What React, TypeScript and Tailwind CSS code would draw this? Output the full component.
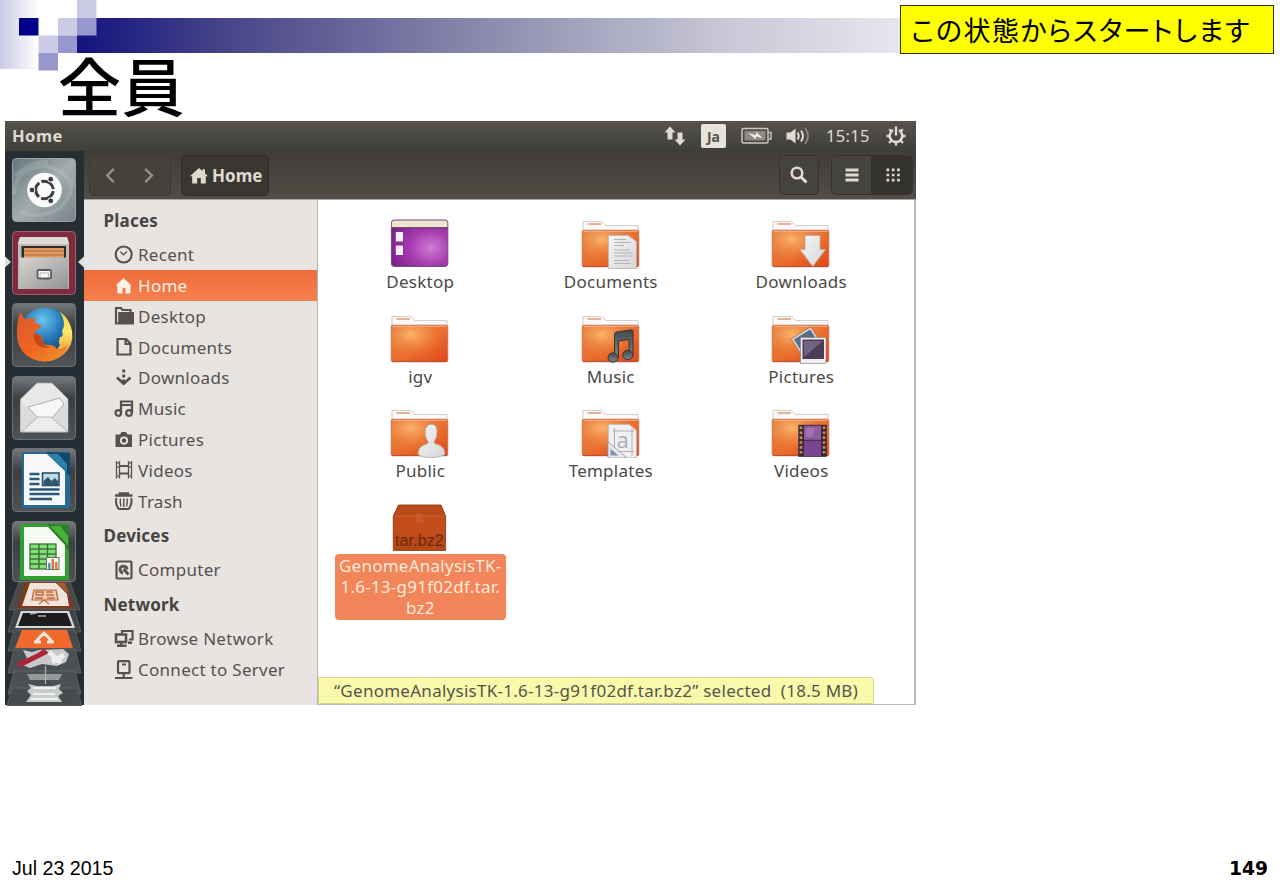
import type { ReactNode } from 'react';

function SharedGradients() {
  return (
    <svg className="absolute h-0 w-0" aria-hidden="true">
      <defs>
        <linearGradient id="folder" x1="0" y1="0" x2="1" y2="1">
          <stop offset="0" stopColor="#dd7a43" />
          <stop offset="0.5" stopColor="#e96f30" />
          <stop offset="1" stopColor="#e2481b" />
        </linearGradient>
        <radialGradient id="folderGlow" cx="0.35" cy="0.25" r="0.65">
          <stop offset="0" stopColor="#ffc078" stopOpacity="0.85" />
          <stop offset="1" stopColor="#f07a2c" stopOpacity="0" />
        </radialGradient>
        <radialGradient id="purple" cx="0.7" cy="0.6" r="0.75">
          <stop offset="0" stopColor="#cf7cd2" />
          <stop offset="0.5" stopColor="#a63bb0" />
          <stop offset="1" stopColor="#7b2289" />
        </radialGradient>
        <linearGradient id="paper" x1="0" y1="0" x2="1" y2="1">
          <stop offset="0" stopColor="#f6f6f6" />
          <stop offset="1" stopColor="#d5d6d8" />
        </linearGradient>
        <linearGradient id="note" x1="0" y1="0" x2="0" y2="1">
          <stop offset="0" stopColor="#444a4c" />
          <stop offset="1" stopColor="#7b8587" />
        </linearGradient>
        <linearGradient id="tile" x1="0" y1="0" x2="0" y2="1">
          <stop offset="0" stopColor="#75797b" />
          <stop offset="0.35" stopColor="#3b3f42" />
          <stop offset="1" stopColor="#505456" />
        </linearGradient>
        <linearGradient id="dash" x1="0" y1="0" x2="1" y2="1">
          <stop offset="0" stopColor="#64747a" />
          <stop offset="0.5" stopColor="#a2adaf" />
          <stop offset="1" stopColor="#778488" />
        </linearGradient>
        <linearGradient id="cabinet" x1="0" y1="0" x2="1" y2="1">
          <stop offset="0" stopColor="#d6d5d3" />
          <stop offset="1" stopColor="#949391" />
        </linearGradient>
        <radialGradient id="globe" cx="0.45" cy="0.25" r="0.75">
          <stop offset="0" stopColor="#6cc5ee" />
          <stop offset="0.5" stopColor="#2478b9" />
          <stop offset="1" stopColor="#123a6e" />
        </radialGradient>
        <linearGradient id="fox" x1="0" y1="0" x2="1" y2="1">
          <stop offset="0" stopColor="#d95a2b" />
          <stop offset="0.5" stopColor="#ee6422" />
          <stop offset="1" stopColor="#f0952c" />
        </linearGradient>
        <linearGradient id="tail" x1="0" y1="0" x2="0" y2="1">
          <stop offset="0" stopColor="#f7d34c" />
          <stop offset="0.4" stopColor="#fbe86c" />
          <stop offset="1" stopColor="#ee7a22" />
        </linearGradient>
      </defs>
    </svg>
  );
}

/* ---------- folder view icons ---------- */

function Folder({ children }: { children?: ReactNode }) {
  return (
    <svg viewBox="0 0 60 50" className="block h-[50px] w-[60px] shrink-0">
      <path d="M2 13V2.4H20.5L25 6.6H57V13Z" fill="#fbfaf8" stroke="#c3c0bd" strokeWidth="0.8" />
      <path d="M6.5 5H20" stroke="#e3a587" strokeWidth="1.7" />
      <rect x="1.2" y="11.2" width="56.6" height="36.6" rx="1.6" fill="url(#folder)" />
      <rect x="1.2" y="11.2" width="56.6" height="36.6" rx="1.6" fill="url(#folderGlow)" stroke="#c96b4b" strokeWidth="0.8" />
      <path d="M2.5 12.4H56.5" stroke="#f6b893" strokeWidth="0.8" />
      <path d="M2 47.4H57" stroke="#b04a28" strokeWidth="0.9" />
      {children}
    </svg>
  );
}

function DesktopIcon() {
  return (
    <svg viewBox="0 0 60 50" className="block h-[50px] w-[60px] shrink-0">
      <rect x="1.4" y="1" width="56.4" height="46.5" rx="3" fill="url(#purple)" stroke="#6d4b78" strokeWidth="1" />
      <path d="M1.8 8.4V4a2.6 2.6 0 0 1 2.6-2.6H54.8A2.6 2.6 0 0 1 57.4 4V8.4Z" fill="#eee5cf" />
      <path d="M1.5 8.8H57.6" stroke="#6b3a66" strokeWidth="1.2" />
      <rect x="5" y="12" width="9" height="11.5" fill="#803093" />
      <rect x="5" y="25.500" width="9" height="11.500" fill="#803093" />
      <rect x="5.800" y="13" width="7.200" height="9.500" fill="#f7ecf8" />
      <rect x="5.800" y="26.500" width="7.200" height="9.500" fill="#f7ecf8" />
    </svg>
  );
}

function DocumentsIcon() {
  return (
    <Folder>
      <path d="M27.3 16.3H47L55.5 22.5V49.7H27.3Z" fill="url(#paper)" stroke="#b0aca8" strokeWidth="0.8" />
      <path d="M33 20.5h12M33 23.5h17M33 26.5h10M33 31h16M33 34h19M33 37h19M33 41.5h15M33 44.5h17" stroke="#b4b4b4" strokeWidth="1" />
    </Folder>
  );
}

function DownloadsIcon() {
  return (
    <Folder>
      <path d="M34 16.5H49V30.5H54.5L41.7 47.5L29 30.5H34Z" fill="url(#paper)" stroke="#c3a99c" strokeWidth="0.8" />
    </Folder>
  );
}

function MusicIcon() {
  return (
    <Folder>
      <g fill="url(#note)" stroke="#3c3230" strokeWidth="1">
        <path d="M33.5 43V20Q33.8 18.4 35.5 18L50.5 15.8Q52 15.8 52 17.4V41.5H48V25.5L37.5 27V43.5Z" />
        <ellipse cx="32" cy="43.5" rx="5" ry="4.7" />
        <ellipse cx="46.8" cy="41" rx="5" ry="4.7" />
      </g>
    </Folder>
  );
}

function PicturesIcon() {
  return (
    <Folder>
      <g transform="rotate(-32 34 27)">
        <rect x="23.5" y="18" width="23" height="22" fill="#ded8d6" stroke="#8d6a5e" strokeWidth="0.7" />
        <rect x="25.5" y="20" width="19" height="16" fill="#5a6c86" />
      </g>
      <rect x="29.5" y="23.5" width="25.5" height="25.8" fill="#f1eff0" stroke="#8f807e" strokeWidth="0.7" />
      <rect x="31.5" y="25.5" width="21.5" height="19.5" fill="#4c3c58" />
      <path d="M33 27H51.5L33 43Z" fill="#706580" />
    </Folder>
  );
}

function PublicIcon() {
  return (
    <Folder>
      <path d="M28 46.5Q28 38 37 35.8L38.5 34Q34.800 30 35.300 23Q36 16.300 41.300 16.300Q46.800 16.300 47 23Q47.300 30 43.800 34L45.500 35.800Q55 38 55 46.500Q50 49.600 41.500 49.600Q32 49.600 28 46.500Z" fill="url(#paper)" stroke="#b5a49d" strokeWidth="0.8" />
    </Folder>
  );
}

function TemplatesIcon() {
  return (
    <Folder>
      <path d="M27.3 16.3H48L55.5 22.5V49.7H27.3Z" fill="#f0f0f3" stroke="#b5b1b0" strokeWidth="0.8" />
      <path d="M31.5 23H53M31.5 43.5H53M33.5 20V47M51 20V48" stroke="#a9a8b3" strokeWidth="0.9" fill="none" />
      <text x="35.5" y="39.5" fontSize="22" fontFamily="Noto Sans, sans-serif" fill="#adacbb">a</text>
      <path d="M27 34L46 50H27Z" fill="#e9e9ef" stroke="#8c8fa0" strokeWidth="0.8" />
      <path d="M29.5 40.5L37.5 47.5H29.5Z" fill="#8193ab" />
    </Folder>
  );
}

function VideosIcon() {
  return (
    <Folder>
      <rect x="27.3" y="16.8" width="28.4" height="32" fill="#362a35" />
      <rect x="33" y="17.8" width="17" height="14" fill="#8d5a9e" />
      <rect x="33" y="32.7" width="17" height="15.5" fill="#7b4490" />
      <path d="M35 20h9l-3 9h-6z" fill="#b282bd" opacity="0.6" />
      <path d="M30 18.5V48M53 18.5V48" stroke="#c7885c" strokeWidth="2.6" strokeDasharray="2.6 2.3" />
    </Folder>
  );
}

function ArchiveIcon() {
  return (
    <svg viewBox="0 0 60 50" className="block h-[50px] w-[60px] shrink-0">
      <path d="M8.5 2H51L55.6 13V47.5H3.3V13Z" fill="#b64718" />
      <path d="M8.5 2H51L55.6 13H3.3Z" fill="#b94b1b" />
      <path d="M3.3 13H55.6V34H3.3Z" fill="#c24d1b" />
      <path d="M3.3 13H55.6" stroke="#ce6334" strokeWidth="1" />
      <path d="M26 11h7v9h-7z" fill="#cb602f" opacity="0.7" />
      <path d="M3.3 13L8.5 2H51L55.6 13V47.5H3.3Z" fill="none" stroke="#93401d" strokeWidth="0.9" />
      <text x="5" y="43" fontSize="16" textLength="49" fontFamily="Liberation Sans, sans-serif" fill="#6d2a0e">tar.bz2</text>
    </svg>
  );
}

/* ---------- sidebar icons ---------- */

function Glyph({ children }: { children: ReactNode }) {
  return (
    <svg viewBox="0 0 20 20" className="block h-5 w-5 shrink-0" fill="none" stroke="currentColor" strokeWidth="2.2">
      {children}
    </svg>
  );
}

function House({ className }: { className: string }) {
  return (
    <svg viewBox="0 0 18 16" className={className} fill="currentColor">
      <path d="M9 0L12.5 3V1.2H15V5.3L18 8.2H15.8V15.5H10.8V10H7.2V15.5H2.2V8.2H0Z" />
    </svg>
  );
}

const clock = (
  <Glyph>
    <circle cx="9.7" cy="9.5" r="8" />
    <path d="M6.3 6.8L9.5 9.8L13 6.5" strokeWidth="1.3" />
  </Glyph>
);
const home = (
  <Glyph>
    <path fill="currentColor" stroke="none" d="M9.5 2L17.5 9.5H16.5V17.5H11.5V12H8.500V17.500H3.300V9.500H1.700Z" />
  </Glyph>
);
const desktop = (
  <Glyph>
    <path d="M2 18V2H7L8.5 4H16.5V6" />
    <path fill="currentColor" stroke="none" d="M4.200 6H20V18.500H4.200ZM1 16.500H5V18.500H1Z" />
  </Glyph>
);
const documents = (
  <Glyph>
    <path d="M3.5 2H12L16.5 6.5V17.5H3.5Z M11.5 2V7H16.5" />
  </Glyph>
);
const downloads = (
  <Glyph>
    <path d="M3 9.5L9.7 15.8L16.500 9.500" strokeWidth="2.6" />
    <path d="M9.7 1.500V15.500" strokeDasharray="3 2" strokeWidth="3" />
  </Glyph>
);
const music = (
  <Glyph>
    <path d="M7 14.5V2.500H18V14M7 6H18" />
    <circle cx="4.300" cy="14" r="2.800" />
    <circle cx="15" cy="14" r="2.800" />
  </Glyph>
);
const pictures = (
  <Glyph>
    <path fill="currentColor" fillRule="evenodd" stroke="none" d="M1.500 4.500H6L7.500 2H12L13.500 4.500H18V17H1.500Z M10 6.500A4 4 0 1 0 10 14.700A4 4 0 1 0 10 6.500Z" />
    <circle cx="10" cy="10.500" r="2.200" fill="currentColor" stroke="none" />
  </Glyph>
);
const videos = (
  <Glyph>
    <path d="M2.5 1V18.500M5.500 1V18.500M14.500 1V18.500M17.500 1V18.500" strokeWidth="1.3" />
    <path d="M2 3H6M2 7H6M2 16H6M14 3H18M14 7H18M14 16H18" strokeWidth="1.200" />
    <path d="M5 6H15M5 13.500H15" />
  </Glyph>
);
const trash = (
  <Glyph>
    <path d="M1 4.500H18.500M4.500 2.500H15" strokeWidth="2.400" />
    <path d="M2.500 7C1.500 9.500 1.500 12.500 4 17Q4.500 18 6 18H13.500Q15 18 15.500 17C18 12.500 18 9.500 17 7" strokeWidth="2" />
    <path d="M6.500 7.500C5.800 10.500 6 12.500 7 15.500M9.800 7.500V16M13 7.500C13.700 10.500 13.500 12.500 12.500 15.500" strokeWidth="1.400" />
  </Glyph>
);
const computer = (
  <Glyph>
    <rect x="2.500" y="1.500" width="15" height="17" rx="1.300" />
    <path d="M9 13A3.500 3.500 0 1 1 13 9.500" strokeWidth="2.800" />
    <path d="M9.500 9L14.500 14.500" strokeWidth="2.800" />
  </Glyph>
);
const browse = (
  <Glyph>
    <path d="M8 4V2H18.500V10.500H15" />
    <rect x="2" y="5.500" width="10" height="7.500" strokeWidth="2.600" />
    <path d="M3 16.700H12.500M7.200 13V17M14 13.700H18" strokeWidth="2.600" />
  </Glyph>
);
const server = (
  <Glyph>
    <rect x="4" y="1.200" width="11.500" height="12" rx="1" />
    <path d="M8 4.500H12M9.700 13.500V18M1 18H18.500" strokeWidth="2.200" />
  </Glyph>
);

/* ---------- launcher tiles ---------- */

function Tile({ children, fill = 'url(#tile)', stroke = '#6d7274' }: { children: ReactNode; fill?: string; stroke?: string }) {
  return (
    <svg viewBox="0 0 64 64" className="block h-16 w-16 shrink-0">
      <rect x="0.500" y="0.500" width="63" height="63" rx="4" fill={fill} stroke={stroke} />
      {children}
    </svg>
  );
}

function DashTile() {
  return (
    <Tile fill="url(#dash)" stroke="#9aa5a8">
      <path d="M2 36Q4 8 34 8Q54 12 60 30M8 54Q26 62 48 50Q60 40 60 20M4 18Q16 4 36 4" fill="none" stroke="#c3cccd" strokeWidth="4" opacity="0.250" />
      <circle cx="32.500" cy="32" r="17.300" fill="#fbfbfb" />
      <circle cx="32.500" cy="32" r="8.800" fill="none" stroke="#3a3f42" strokeWidth="3" strokeDasharray="16 2.430" strokeDashoffset="-1.200" />
      <g fill="#3a3f42" stroke="#fbfbfb" strokeWidth="1">
        <circle cx="20" cy="32" r="2.900" />
        <circle cx="38.700" cy="21.200" r="2.900" />
        <circle cx="38.700" cy="42.800" r="2.900" />
      </g>
    </Tile>
  );
}

function FilesTile() {
  return (
    <Tile fill="#7e2b40" stroke="#a45b6c">
      <path d="M8 6H55L57 12V58H6V12Z" fill="#bcbab7" />
      <path d="M8 6H55L57 13H6Z" fill="#dddbd8" />
      <rect x="9.500" y="15" width="44.500" height="14" fill="#322c29" />
      <path d="M12 17H52V29H12Z" fill="#dc9a5e" />
      <path d="M12 20H52M12 24H52" stroke="#c07a48" strokeWidth="1.300" />
      <rect x="7.500" y="26.500" width="48.500" height="31.500" fill="url(#cabinet)" />
      <rect x="25.500" y="39" width="13.500" height="8.500" rx="1.500" fill="#f6f6f6" stroke="#5c5a58" strokeWidth="1.800" />
      <path d="M28 46V42H36.500V46" fill="none" stroke="#a5a29e" strokeWidth="0.800" />
    </Tile>
  );
}

function FirefoxTile() {
  return (
    <Tile>
      <circle cx="33" cy="30" r="25.500" fill="url(#globe)" />
      <path d="M48 9Q58 16 60 28Q62 42 52 51Q42 60 28 58Q42 53 48 42Q46 40 48 34Q52 34 50 28Q55 20 48 9Z" fill="url(#tail)" />
      <path d="M9 8Q10 14 13 16Q18 14 23 16Q22 19 25 21Q27 22 30 22Q28 26 24 27Q21 30 23 32Q29 31 31 36Q29 42 38 42Q42 42 45 46Q52 47 56 41Q52 54 40 57.500Q26 61 14 52Q5 44 5 32Q4 18 9 8Z" fill="url(#fox)" />
      <path d="M22 30Q20 38 27 43Q32 46 38 44Q32 43 31 38Q31 32 22 30Z" fill="#c3491c" />
    </Tile>
  );
}

function MailTile() {
  return (
    <Tile>
      <path d="M8.500 23L25 7H40L56 23V56H8.500Z" fill="#e8e8e8" stroke="#a8a8a8" strokeWidth="0.700" />
      <path d="M8.500 25L27 42H37L56 25V56H8.500Z" fill="#dcdcdd" />
      <path d="M16 31L48 22L52 28L40 42H26Z" fill="#f7f7f7" stroke="#9c9c9c" strokeWidth="0.800" />
      <path d="M9 56L26 41H39L56 56Z" fill="#ececec" stroke="#aaaaaa" strokeWidth="0.800" />
    </Tile>
  );
}

function WriterTile() {
  return (
    <Tile>
      <path d="M10 4H58V60H10Z" fill="#236c96" />
      <path d="M34 4L58 5V28Z" fill="#16476b" />
      <path d="M12 6H35L53 23V57H12Z" fill="#f5f7f9" />
      <path d="M36 6H46L55 16V24Z" fill="#2d80a9" />
      <path d="M17.500 26H27.500M17.500 31H27.500M17.500 36H27.500M17.500 41.500H47.500M17.500 46H47.500M17.500 51H40" stroke="#29587a" strokeWidth="2.600" />
      <rect x="30.500" y="25" width="16.500" height="12.500" fill="#bddde9" stroke="#29506b" strokeWidth="1.600" />
      <path d="M31.500 36V33L36 29L39.500 33L43 30L46 33V37H31.500Z" fill="#31566c" />
    </Tile>
  );
}

function CalcTile() {
  return (
    <svg viewBox="0 0 64 61" className="block h-[61px] w-16 shrink-0">
      <rect x="0.500" y="0.500" width="63" height="60" rx="4" fill="url(#tile)" stroke="#717b76" />
      <path d="M8 3H57V59H8Z" fill="#2f9f2d" />
      <path d="M35 3L57 4V30Z" fill="#2f7b2d" />
      <path d="M12 6H36L53 24V55H12Z" fill="#f5faf2" />
      <path d="M38 5H48L56 15V24Z" fill="#46b338" />
      <rect x="18" y="23" width="26" height="25" fill="#84e077" stroke="#3d713b" strokeWidth="1.300" />
      <path d="M27 23V48M35.500 23V48M18 28H44M18 33H44M18 38H44M18 43H44" stroke="#3d713b" strokeWidth="1.400" />
      <rect x="34.500" y="36.500" width="12.500" height="12" fill="#f4f4f4" stroke="#627662" strokeWidth="1" />
      <path d="M40.800 48V38M44.300 48V41" stroke="#dc7838" strokeWidth="2.400" />
      <path d="M37.300 48V42" stroke="#4b91c4" strokeWidth="2.400" />
    </svg>
  );
}

function FoldedTiles() {
  return (
    <svg viewBox="0 0 79 124" className="block h-[124px] w-[79px] shrink-0">
      <path d="M14 0H65L75 28H4Z" fill="#4c4948" stroke="#5f6364" strokeWidth="0.800" />
      <path d="M20 0H60L69 27H12Z" fill="#7b3b1d" />
      <path d="M25 1H51L62 12L64 24H17Z" fill="#f1e4dc" />
      <path d="M51 1H60L64 12Z" fill="#a85b32" />
      <path d="M29 8H51L53 18H27Z" fill="#f3cdb5" stroke="#ae6238" strokeWidth="1.200" />
      <path d="M31 10H38V13H31ZM41 10H48M41 13H49M30 16H38M42 16H50M34 22L39 18L44 22" fill="none" stroke="#ba6b3c" strokeWidth="1.300" />
      <path d="M10 27H69L76 50H3Z" fill="#404648" stroke="#5f6466" strokeWidth="0.800" />
      <path d="M16 29H64L70 46H10Z" fill="#d8d8d8" />
      <path d="M18 31H62L67 44H13Z" fill="#1d1d20" />
      <path d="M25 32L32 31M33 34H41" stroke="#a9a9a9" strokeWidth="1.500" />
      <path d="M9 48H70L76 69H3Z" fill="#454a4c" stroke="#5f6466" strokeWidth="0.800" />
      <path d="M17 48H62L68 66H10Z" fill="#f06a2e" />
      <path d="M34 56L39 51L44 56M29 60H36M42 60H49M34 56L31 60M44 56L47 60" fill="none" stroke="#fbe4d8" strokeWidth="3" />
      <path d="M9 67H70L76 91H3Z" fill="#4b5052" stroke="#626769" strokeWidth="0.800" />
      <path d="M18 68L27 70L34 68L58 67L64 72L61 80L52 84L37 82L25 86L15 82L22 76Z" fill="#c7c9c9" />
      <path d="M12 81Q11 86 18 84L44 71L39 67L31 72Z" fill="#ad2437" />
      <path d="M44 70L56 81M47 80L59 73" stroke="#eeeeee" strokeWidth="5" />
      <path d="M9 89H70L76 112H3Z" fill="#4b5052" stroke="#626769" strokeWidth="0.800" />
      <path d="M22 92H57L54 98H25Z" fill="#94999a" />
      <path d="M7 106H72L77 124H2Z" fill="#464c4e" stroke="#5f6466" strokeWidth="0.800" />
      <path d="M23 102L32 104H48L56 102L54 107L58 111L53 114L57 120H21L26 113L22 109L26 106Z" fill="#c8cbcb" />
      <path d="M28 106H51M28 112H50M26 117H53" stroke="#f0f0f0" strokeWidth="1.800" />
      <path d="M40.500 84V102" stroke="#aeb2b3" strokeWidth="1.200" />
    </svg>
  );
}

/* ---------- data ---------- */

type Place = { label: string; icon: ReactNode; active?: boolean };
type Section = { title: string; items: Place[] };

const sections: Section[] = [
  {
    title: 'Places',
    items: [
      { label: 'Recent', icon: clock },
      { label: 'Home', icon: home, active: true },
      { label: 'Desktop', icon: desktop },
      { label: 'Documents', icon: documents },
      { label: 'Downloads', icon: downloads },
      { label: 'Music', icon: music },
      { label: 'Pictures', icon: pictures },
      { label: 'Videos', icon: videos },
      { label: 'Trash', icon: trash },
    ],
  },
  { title: 'Devices', items: [{ label: 'Computer', icon: computer }] },
  {
    title: 'Network',
    items: [
      { label: 'Browse Network', icon: browse },
      { label: 'Connect to Server', icon: server },
    ],
  },
];

const files: { label: string; icon: ReactNode }[] = [
  { label: 'Desktop', icon: <DesktopIcon /> },
  { label: 'Documents', icon: <DocumentsIcon /> },
  { label: 'Downloads', icon: <DownloadsIcon /> },
  { label: 'igv', icon: <Folder /> },
  { label: 'Music', icon: <MusicIcon /> },
  { label: 'Pictures', icon: <PicturesIcon /> },
  { label: 'Public', icon: <PublicIcon /> },
  { label: 'Templates', icon: <TemplatesIcon /> },
  { label: 'Videos', icon: <VideosIcon /> },
];

/* ---------- regions ---------- */

function SlideHeader() {
  return (
    <header className="relative h-[121px]">
      <div className="absolute left-0 top-0 h-[69px] w-[39px] bg-linear-to-r from-[#cbcbe8] to-white" />
      <div className="absolute left-[77px] top-[18px] h-[35px] w-[1190px] bg-[linear-gradient(to_right,#131380_0%,#494789_13%,#625f97_21%,#8080a8_31%,#acacc3_45%,#c9c9d7_55%,#e6e6ee_69%,#ffffff_100%)]" />
      <svg viewBox="0 0 100 72" className="absolute left-0 top-0 h-[72px] w-[100px]">
        <rect x="19" y="18" width="19.500" height="17.500" fill="#00008b" />
        <rect x="38.500" y="35.500" width="19.500" height="17.500" fill="#cbcbe6" />
        <rect x="58" y="18" width="19" height="17.500" fill="#cbcbe6" />
        <rect x="77" y="0" width="19.500" height="18" fill="#cbcbe6" />
        <rect x="77" y="18" width="19.500" height="17.500" fill="#9797cd" />
        <rect x="58" y="35.500" width="19" height="17.500" fill="#9797cd" />
        <rect x="38.500" y="53" width="19.500" height="17.500" fill="#9797cd" />
      </svg>
      <h1 className="absolute left-[58px] top-[48px] text-[63px] font-medium leading-[72px] tracking-[0.5px] font-['Noto_Sans_CJK_JP',sans-serif]">全員</h1>
      <div className="absolute left-[900px] top-[5px] flex h-[49px] w-[374px] items-center border-[1.5px] border-[#303000] bg-[#ffff00] pl-[10px]">
        <span className="whitespace-nowrap text-[27px] leading-none tracking-[1.5px] [font-feature-settings:'palt'] font-['Noto_Sans_CJK_JP',sans-serif]">この状態からスタートします</span>
      </div>
    </header>
  );
}

function TopPanel() {
  return (
    <div className="flex h-[30px] items-center bg-linear-to-b from-[#55534c] to-[#403e39] pl-[7px] pr-[10px] text-[#dfdbd2]">
      <span className="text-[16.5px] font-bold tracking-[0.5px]">Home</span>
      <svg viewBox="0 0 22 20" className="ml-auto h-5 w-[22px]" fill="currentColor">
        <path d="M6 0.500L11.500 6.500H8.500V13.500H3.500V6.500H0.500Z" />
        <path d="M16 19.500L10.500 13.500H13.500V6.500H18.500V13.500H21.500Z" />
      </svg>
      <div className="ml-[15px] flex h-6 w-[25px] items-center justify-center rounded-[2px] bg-[#e6e3dc] text-[14px] font-bold text-[#56524c]">Ja</div>
      <svg viewBox="0 0 31 18" className="ml-[15px] h-[18px] w-[31px]">
        <rect x="1" y="1.500" width="26" height="14.500" rx="1.500" fill="none" stroke="#cbc7bf" strokeWidth="1.500" />
        <rect x="3.500" y="4" width="21" height="9.500" fill="#8d8983" />
        <path d="M28 5.500H30V12H28" fill="none" stroke="#cbc7bf" strokeWidth="1.400" />
        <path d="M7 6L15 8V4.500L22 11.500L15 9.500V12.500Z" fill="#eeeae2" />
      </svg>
      <svg viewBox="0 0 25 20" className="ml-[14px] h-5 w-[25px]" fill="none" stroke="currentColor">
        <path d="M0.500 6.500H4.500L9.500 2.500V17.500L4.500 13.500H0.500Z" fill="currentColor" stroke="none" />
        <path d="M11.500 6.500Q14 10 11.500 13.500M15 4.500Q19 10 15 15.500" strokeWidth="2" />
        <path d="M19 2Q25 10 19 18" stroke="#8b8881" strokeWidth="1.800" />
      </svg>
      <span className="ml-[15px] w-[45px] whitespace-nowrap text-[16.5px] tracking-[0.3px]">15:15</span>
      <svg viewBox="0 0 20 20" className="ml-[15px] h-5 w-5" fill="none" stroke="currentColor">
        <path d="M7 4.200A6.300 6.300 0 1 0 13 4.200" strokeWidth="2.500" />
        <path d="M10 0.500V9.500" strokeWidth="2.300" />
        <path d="M10 16V19.500M4 10H0.500M16 10H19.500M5.500 14.500L3 17M14.500 14.500L17 17M5.500 5.500L3.200 3.200M14.500 5.500L16.800 3.200" strokeWidth="2.300" />
      </svg>
    </div>
  );
}

function Launcher() {
  return (
    <aside className="relative flex w-[79px] shrink-0 flex-col bg-[#262e33]">
      <div className="flex flex-col gap-[8.5px] pl-[7px] pt-[7px]">
        <DashTile />
        <FilesTile />
        <FirefoxTile />
        <MailTile />
        <WriterTile />
        <CalcTile />
      </div>
      <FoldedTiles />
      <svg viewBox="0 0 79 12" className="absolute left-0 top-[105px] h-3 w-[79px]" fill="#dfdfdf">
        <path d="M0 0.500L6 6L0 11.500ZM79 0.500L73 6L79 11.500Z" />
      </svg>
    </aside>
  );
}

function Toolbar() {
  return (
    <div className="flex h-[49px] items-center border-b border-[#aaa7a2] bg-linear-to-b from-[#403d39] to-[#514e47] pl-[5px] pr-[3px] text-[#dfdbd2]">
      <div className="flex h-[41px] w-[82px] items-center justify-around rounded-[5px] border border-[#3d3a35] bg-[#45423c] pr-[2px]">
        <svg viewBox="0 0 12 18" className="h-[17px] w-3" fill="none" stroke="#969289" strokeWidth="2.5">
          <path d="M10 2L3 9L10 16" />
        </svg>
        <svg viewBox="0 0 12 18" className="h-[17px] w-3" fill="none" stroke="#969289" strokeWidth="2.5">
          <path d="M2 2L9 9L2 16" />
        </svg>
      </div>
      <div className="ml-[10px] flex h-[41px] w-[88px] items-center gap-1 rounded-[5px] border border-[#302e2a] bg-[#3a3732] pl-[8px] pt-[2px]">
        <House className="h-4 w-[18px] shrink-0" />
        <span className="text-[17px] font-bold">Home</span>
      </div>
      <div className="ml-auto flex h-[40px] w-[40px] items-center justify-center rounded-[5px] border border-[#35332f] bg-[#45433d]">
        <svg viewBox="0 0 20 20" className="h-5 w-5" fill="none" stroke="currentColor">
          <circle cx="8" cy="8" r="5.300" strokeWidth="2.600" />
          <path d="M12 12L17.500 17.500" strokeWidth="3" />
        </svg>
      </div>
      <div className="ml-[12px] flex h-[40px] w-[82px] overflow-hidden rounded-[5px] border border-[#35332f] bg-[#45433d]">
        <div className="flex w-[39px] items-center justify-center">
          <svg viewBox="0 0 14 14" className="h-[14px] w-[14px]" stroke="currentColor" strokeWidth="2.8">
            <path d="M0.500 2H13.500M0.500 7H13.500M0.500 12H13.500" />
          </svg>
        </div>
        <div className="flex flex-1 items-center justify-center bg-[#34322e] pl-[2px]">
          <svg viewBox="0 0 14 14" className="h-[14px] w-[14px]" stroke="currentColor" strokeWidth="2.7" strokeDasharray="2.7 2.6">
            <path d="M0.500 1.800H14M0.500 7H14M0.500 12.200H14" />
          </svg>
        </div>
      </div>
    </div>
  );
}

function Sidebar() {
  return (
    <nav className="w-[234px] shrink-0 border-r border-[#b9b5b2] bg-[#e8e4e2] pt-[1.5px] text-[#55524e]">
      {sections.map((section) => (
        <section key={section.title}>
          <h2 className="flex h-[38px] items-center pl-[19.5px] text-[17px] font-bold tracking-[0.2px] text-[#474441]">{section.title}</h2>
          {section.items.map((item) => (
            <div
              key={item.label}
              className={
                item.active
                  ? 'flex h-[30.8px] items-center gap-1 bg-linear-to-b from-[#ee6c3a] to-[#f5804e] pl-[30px] text-[17px] tracking-[0.28px] text-[#fdf0e6]'
                  : 'flex h-[30.8px] items-center gap-1 pl-[30px] text-[17px] tracking-[0.28px]'
              }
            >
              {item.icon}
              <span className="whitespace-nowrap">{item.label}</span>
            </div>
          ))}
        </section>
      ))}
    </nav>
  );
}

function FileGrid() {
  return (
    <main className="flex min-w-0 flex-1 flex-col border-b border-r-2 border-[#bdbbb9] bg-white">
      <div className="grid grid-cols-[repeat(3,190.5px)] auto-rows-[94.6px] pl-[7px] pt-[19px] text-[17px] tracking-[0.25px] text-[#4b4846]">
        {files.map((file) => (
          <div key={file.label} className="flex flex-col items-center">
            {file.icon}
            <span className="leading-[26px]">{file.label}</span>
          </div>
        ))}
        <div className="flex flex-col items-center">
          <ArchiveIcon />
          <div className="mt-[1px] flex h-[66px] w-[171px] shrink-0 flex-col items-center rounded-[4px] bg-[#f28559] pt-[1.5px] leading-[21px] text-[#fdeadb]">
            <span className="whitespace-nowrap">GenomeAnalysisTK-</span>
            <span className="whitespace-nowrap">1.6-13-g91f02df.tar.</span>
            <span>bz2</span>
          </div>
        </div>
      </div>
      <div className="mt-auto flex h-[27px] w-[556px] items-center whitespace-pre rounded-tr-[3px] border border-[#d8d68c] bg-[#fafaac] pl-[15px] text-[17px] tracking-[0.27px] text-[#55544a]">
        “GenomeAnalysisTK-1.6-13-g91f02df.tar.bz2” selected  (18.5 MB)
      </div>
    </main>
  );
}

export default function App() {
  return (
    <div className="flex h-[886px] w-[1280px] flex-col overflow-hidden bg-white text-black">
      <SharedGradients />
      <SlideHeader />
      <div className="ml-[5px] flex h-[584px] w-[911px] flex-col font-['Noto_Sans',sans-serif]">
        <TopPanel />
        <div className="flex min-h-0 flex-1">
          <Launcher />
          <div className="flex min-w-0 flex-1 flex-col">
            <Toolbar />
            <div className="flex min-h-0 flex-1">
              <Sidebar />
              <FileGrid />
            </div>
          </div>
        </div>
      </div>
      <footer className="mt-auto flex h-[34px] items-center justify-between pl-3 pr-[12px]">
        <span className="text-[19.6px] font-['Liberation_Sans',sans-serif]">Jul 23 2015</span>
        <span className="pt-px text-[18.7px] font-bold font-['DejaVu_Sans',sans-serif]">149</span>
      </footer>
    </div>
  );
}
